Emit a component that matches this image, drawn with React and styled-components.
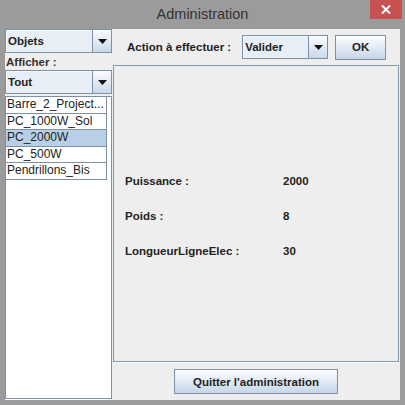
import styled, { createGlobalStyle } from 'styled-components';

const objets = ['Barre_2_Project...', 'PC_1000W_Sol', 'PC_2000W', 'PC_500W', 'Pendrillons_Bis']
const props = [
  { label: 'Puissance :', value: '2000' },
  { label: 'Poids :', value: '8' },
  { label: 'LongueurLigneElec :', value: '30' },
]

function Combo({ value, width }) {
  return (
    <ComboBox width={width}>
      <ComboField>{value}</ComboField>
      <ComboArrow>
        <svg width="9" height="5" viewBox="0 0 9 5">
          <path d="M0 0 H9 L4.5 5 Z" fill="#111" />
        </svg>
      </ComboArrow>
    </ComboBox>
  )
}

function App() {
  return (
    <>
      <GlobalStyle />
      <Window>
        <TitleBar>
          <span />
          <Title>Administration</Title>
          <CloseButton>
            <svg width="10" height="9" viewBox="0 0 10 9">
              <path d="M1 0.5 L9 8.5 M9 0.5 L1 8.5" stroke="#fff" strokeWidth="2" />
            </svg>
          </CloseButton>
        </TitleBar>
        <Body>
          <LeftPanel>
            <Combo value="Objets" />
            <SideLabel>Afficher :</SideLabel>
            <Combo value="Tout" />
            <List>
              <Rows>
                {objets.map((o) => (
                  <Row key={o} selected={o === 'PC_2000W'}>{o}</Row>
                ))}
              </Rows>
            </List>
          </LeftPanel>
          <RightPanel>
            <ActionBar>
              <ActionLabel>Action à effectuer :</ActionLabel>
              <Combo value="Valider" width={86} />
              <Button small>OK</Button>
            </ActionBar>
            <Details>
              {props.map((p) => (
                <DetailRow key={p.label}>
                  <span>{p.label}</span>
                  <span>{p.value}</span>
                </DetailRow>
              ))}
            </Details>
            <Footer>
              <Button>Quitter l'administration</Button>
            </Footer>
          </RightPanel>
        </Body>
      </Window>
    </>
  )
}

export default App

const GlobalStyle = createGlobalStyle`
  body {
    margin: 0;
    background: #9b9b9b;
    font-family: 'Liberation Sans', Arial, sans-serif;
  }
`
const Window = styled.div`
  width: 405px;
  height: 405px;
  display: flex;
  flex-direction: column;
  background: #9b9b9b;
`
const TitleBar = styled.div`
  height: 29px;
  display: grid;
  grid-template-columns: 1fr auto 1fr;
  align-items: start;
`
const Title = styled.div`
  font-size: 14.5px;
  color: #333;
  line-height: 29px;
`
const CloseButton = styled.div`
  justify-self: end;
  margin-right: 3px;
  width: 32px;
  height: 19px;
  background: #c75050;
  display: flex;
  align-items: center;
  justify-content: center;
`
const Body = styled.div`
  flex: 1;
  margin: 0 5px 5px 5px;
  background: #eeeeee;
  display: flex;
`
const LeftPanel = styled.div`
  width: 107px;
  display: flex;
  flex-direction: column;
`
const ComboBox = styled.div`
  height: 24px;
  width: ${(p) => (p.width ? `${p.width}px` : 'auto')};
  box-sizing: border-box;
  border: 1px solid #7d91a6;
  display: flex;
  flex-shrink: 0;
`
const ComboField = styled.div`
  flex: 1;
  background: #e8eef5;
  font-size: 11.5px;
  font-weight: bold;
  color: #222;
  padding-left: 2px;
  display: flex;
  align-items: center;
  box-shadow: inset 1px 1px 0 #f6f9fc;
`
const ComboArrow = styled.div`
  width: 18px;
  border-left: 1px solid #7d91a6;
  background: linear-gradient(#fbfcfe, #c9d8e9);
  display: flex;
  align-items: center;
  justify-content: center;
`
const SideLabel = styled.div`
  height: 17px;
  font-size: 11.5px;
  font-weight: bold;
  color: #333;
  padding-left: 1px;
  display: flex;
  align-items: center;
`
const List = styled.div`
  flex: 1;
  margin-top: 2px;
  margin-bottom: 1px;
  background: #fff;
  border: 1px solid #7d91a6;
  box-shadow: 0 1px 0 #fff;
`
const Rows = styled.div`
  width: 100px;
  border-right: 1px solid #7d91a6;
`
const Row = styled.div`
  height: 15.5px;
  line-height: 15.5px;
  padding-left: 1px;
  font-size: 12px;
  color: #222;
  white-space: nowrap;
  overflow: hidden;
  border-bottom: 1px solid #7d91a6;
  background: ${(p) => (p.selected ? '#b8cfe5' : '#fff')};
`
const RightPanel = styled.div`
  flex: 1;
  display: flex;
  flex-direction: column;
  padding: 0 1px 0 1px;
`
const ActionBar = styled.div`
  height: 36px;
  padding-left: 14px;
  display: flex;
  align-items: center;
  gap: 8px;
`
const ActionLabel = styled.div`
  font-size: 11.5px;
  font-weight: bold;
  color: #222;
  margin-right: 3px;
`
const Button = styled.div`
  height: 25px;
  box-sizing: border-box;
  width: ${(p) => (p.small ? '51px' : '164px')};
  margin-left: ${(p) => (p.small ? '-1px' : '0')};
  border: 1px solid #7d91a6;
  background: linear-gradient(#fdfeff, #dbe6f2 60%, #c6d6e8);
  font-size: 11.5px;
  font-weight: bold;
  color: #222;
  display: flex;
  align-items: center;
  justify-content: center;
`
const Details = styled.div`
  height: 297px;
  box-sizing: border-box;
  border: 1px solid #8497ab;
  box-shadow: 0 1px 0 #fff;
  display: flex;
  flex-direction: column;
  justify-content: center;
  gap: 20px;
  padding: 5px 0 0 11px;
`
const DetailRow = styled.div`
  display: grid;
  grid-template-columns: 158px 1fr;
  font-size: 11.5px;
  font-weight: bold;
  color: #222;
  line-height: 15px;
`
const Footer = styled.div`
  flex: 1;
  display: flex;
  justify-content: center;
  padding-top: 7px;
`
